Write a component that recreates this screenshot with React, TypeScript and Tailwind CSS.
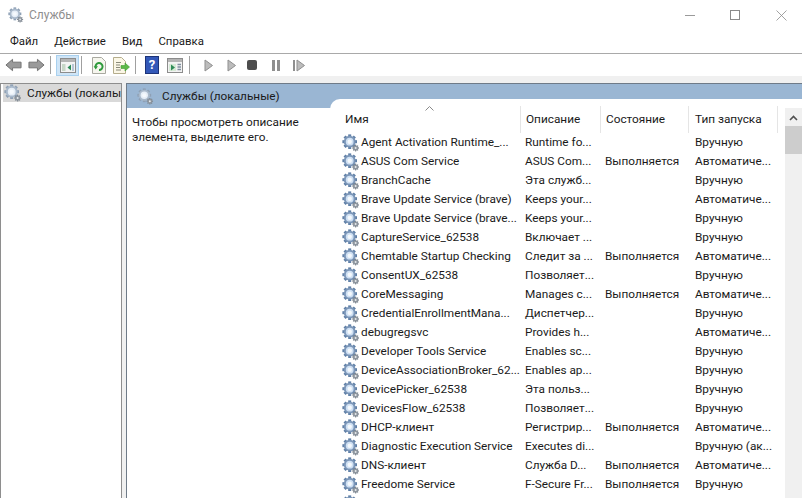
import React from 'react';

const rows = [
  ['Agent Activation Runtime_...', 'Runtime fo...', '', 'Вручную'],
  ['ASUS Com Service', 'ASUS Com...', 'Выполняется', 'Автоматиче...'],
  ['BranchCache', 'Эта служб...', '', 'Вручную'],
  ['Brave Update Service (brave)', 'Keeps your...', '', 'Автоматиче...'],
  ['Brave Update Service (brave...', 'Keeps your...', '', 'Вручную'],
  ['CaptureService_62538', 'Включает ...', '', 'Вручную'],
  ['Chemtable Startup Checking', 'Следит за ...', 'Выполняется', 'Автоматиче...'],
  ['ConsentUX_62538', 'Позволяет...', '', 'Вручную'],
  ['CoreMessaging', 'Manages c...', 'Выполняется', 'Автоматиче...'],
  ['CredentialEnrollmentMana...', 'Диспетчер...', '', 'Вручную'],
  ['debugregsvc', 'Provides h...', '', 'Автоматиче...'],
  ['Developer Tools Service', 'Enables sc...', '', 'Вручную'],
  ['DeviceAssociationBroker_62...', 'Enables ap...', '', 'Вручную'],
  ['DevicePicker_62538', 'Эта польз...', '', 'Вручную'],
  ['DevicesFlow_62538', 'Позволяет...', '', 'Вручную'],
  ['DHCP-клиент', 'Регистрир...', 'Выполняется', 'Автоматиче...'],
  ['Diagnostic Execution Service', 'Executes di...', '', 'Вручную (ак...'],
  ['DNS-клиент', 'Служба D...', 'Выполняется', 'Автоматиче...'],
  ['Freedome Service', 'F-Secure Fr...', 'Выполняется', 'Вручную'],
  ['', '', '', ''],
];

const teeth = [0, 45, 90, 135, 180, 225, 270, 315];

function Gear({ size = 18, pale = false }: { size?: number; pale?: boolean }) {
  const main = pale ? '#a9b9cb' : '#7b96b8';
  const dark = pale ? '#8ea0b5' : '#5f7fa6';
  const inner = pale ? '#e6eef7' : '#cfe0f3';
  return (
    <svg width={size} height={size} viewBox="0 0 18 18" className="shrink-0">
      {teeth.map((a) => (
        <rect key={a} x="6.2" y="0.4" width="3" height="3.2" fill={dark} transform={`rotate(${a} 7.7 7.7)`} />
      ))}
      <circle cx="7.7" cy="7.7" r="5.9" fill={main} />
      <circle cx="7.7" cy="7.7" r="3.9" fill={inner} />
      <circle cx="7.7" cy="7.7" r="2.2" fill="#f5f9fd" />
      {teeth.map((a) => (
        <rect key={a} x="13" y="10.6" width="1.2" height="1.6" fill="#77808a" transform={`rotate(${a} 13.6 14)`} />
      ))}
      <circle cx="13.6" cy="14" r="2.6" fill="#8d959e" />
      <circle cx="13.6" cy="14" r="1" fill="#e8ebee" />
    </svg>
  );
}

function Sep() {
  return <div className="w-px h-[18px] bg-[#a0a0a0] shrink-0" />;
}

function Arrow({ flip = false }: { flip?: boolean }) {
  return (
    <svg width="17" height="14" viewBox="0 0 18 14" className={flip ? 'rotate-180' : ''}>
      <path d="M1 7 L8 1 V4 H17 V10 H8 V13 Z" fill="#9a9a9a" stroke="#707070" strokeWidth="1" />
    </svg>
  );
}

function Window({ variant }: { variant: 'tree' | 'play' }) {
  return (
    <svg width="16" height="15" viewBox="0 0 16 15">
      <rect x="0.5" y="0.5" width="15" height="14" fill="#f3f3f3" stroke="#8c8c8c" />
      <rect x="1" y="1" width="14" height="3" fill="#b4b4b4" />
      {variant === 'tree' ? (
        <>
          <rect x="2" y="6" width="3.5" height="7" fill="#c7d6c7" />
          <path d="M11 6.5 V12.5 L7.5 9.5 Z" fill="#2e8b57" />
          <rect x="12" y="6" width="2" height="7" fill="#b7c6d6" />
        </>
      ) : (
        <>
          <rect x="2" y="6" width="7" height="7" fill="#d6ead6" />
          <path d="M4 6.5 V12.5 L8 9.5 Z" fill="#2e8b57" />
          <path d="M10.5 6.5 H14 M10.5 9 H14 M10.5 11.5 H14" stroke="#7f8f9f" strokeWidth="1.4" />
        </>
      )}
    </svg>
  );
}

function Refresh() {
  return (
    <svg width="14" height="17" viewBox="0 0 14 17">
      <path d="M0.5 0.5 H9.5 L13.5 4.5 V16.5 H0.5 Z" fill="#f6f6ee" stroke="#a9a9a0" />
      <path d="M3.6 10 A3.5 3.5 0 1 1 7 13" fill="none" stroke="#2f9a3c" strokeWidth="2" />
      <path d="M1.6 9.2 H6 L3.7 12.4 Z" fill="#2f9a3c" />
    </svg>
  );
}

function ExportIcon() {
  return (
    <svg width="17" height="17" viewBox="0 0 17 17">
      <path d="M0.5 0.5 H8.5 L12.5 4.5 V16.5 H0.5 Z" fill="#fbf7e6" stroke="#b5ad8c" />
      <path d="M3 5.5 H8 M3 8 H7 M3 10.5 H7 M3 13 H8" stroke="#8a8a7a" strokeWidth="1" />
      <path d="M8 8.5 H12 V6 L16.5 10 L12 14 V11.5 H8 Z" fill="#5cb947" stroke="#3f9a32" strokeWidth="0.6" />
    </svg>
  );
}

function Play() {
  return (
    <svg width="10" height="13" viewBox="0 0 10 13">
      <path d="M1 1 L8.5 6.5 L1 12 Z" fill="#bcbcbc" stroke="#8f8f8f" />
    </svg>
  );
}

function Cell({ w, children }: { w: string; children?: React.ReactNode }) {
  return <div className={`${w} shrink-0 whitespace-nowrap overflow-hidden`}>{children}</div>;
}

export default function App() {
  return (
    <div className="w-[802px] h-[498px] overflow-hidden bg-white flex flex-col text-[11.8px] leading-[19px] text-[#1a1a1a] font-['Roboto','Noto_Sans',sans-serif]">
      {/* title bar */}
      <div className="h-[30px] shrink-0 flex items-center pl-[8px]">
        <Gear size={16} pale />
        <span className="ml-[5px] text-[12px] text-[#8f8f8f]">Службы</span>
        <div className="ml-auto flex items-center text-[#8a8a8a]">
          <div className="w-[40px] flex justify-center">
            <div className="w-[10px] h-px bg-[#9a9a9a]" />
          </div>
          <div className="w-[50px] flex justify-center">
            <div className="w-[10px] h-[10px] border border-[#8a8a8a]" />
          </div>
          <div className="w-[42px] flex justify-center">
            <svg width="11" height="11" viewBox="0 0 11 11">
              <path d="M0.5 0.5 L10.5 10.5 M10.5 0.5 L0.5 10.5" stroke="#8a8a8a" strokeWidth="0.8" />
            </svg>
          </div>
        </div>
      </div>

      {/* menu */}
      <div className="h-[22px] shrink-0 flex items-center pl-[10px] gap-[16px] text-[11.4px] border-b border-[#a9a9a9] box-content pb-px">
        <span>Файл</span>
        <span>Действие</span>
        <span>Вид</span>
        <span>Справка</span>
      </div>

      {/* toolbar */}
      <div className="h-[22px] shrink-0 flex items-center pl-[5px]">
        <Arrow />
        <div className="w-[6px]" />
        <Arrow flip />
        <div className="w-[5px]" />
        <Sep />
        <div className="w-[5px]" />
        <div className="w-[23px] h-[21px] bg-[#cfe5f7] border border-[#a9d0ee] flex items-center justify-center">
          <Window variant="tree" />
        </div>
        <div className="w-[2px]" />
        <Sep />
        <div className="w-[10px]" />
        <Refresh />
        <div className="w-[7px]" />
        <ExportIcon />
        <div className="w-[5px]" />
        <Sep />
        <div className="w-[9px]" />
        <div className="w-[14px] h-[18px] bg-[#3358b8] border border-[#1c3378] text-white text-[13px] leading-[16px] font-bold text-center">?</div>
        <div className="w-[8px]" />
        <Window variant="play" />
        <div className="w-[6px]" />
        <Sep />
        <div className="w-[14px]" />
        <Play />
        <div className="w-[13px]" />
        <Play />
        <div className="w-[10px]" />
        <div className="w-[10px] h-[10px] rounded-[2px] bg-[#4d4d4d]" />
        <div className="w-[15px]" />
        <div className="flex gap-[2px]">
          <div className="w-[3px] h-[11px] bg-[#8f8f8f]" />
          <div className="w-[3px] h-[11px] bg-[#8f8f8f]" />
        </div>
        <div className="w-[13px]" />
        <div className="w-[2px] h-[11px] bg-[#8f8f8f] mr-px" />
        <Play />
      </div>

      {/* strip between toolbar and panes */}
      <div className="h-[7px] shrink-0 bg-[#f0f0f0]" />

      {/* panes */}
      <div className="flex-1 min-h-0 flex bg-[#f0f0f0]">
        <div className="w-[122px] shrink-0 bg-white border border-[#8e8e8e] border-b-0 overflow-hidden">
          <div className="h-[18px] ml-[2px] bg-[#d9d9d9] flex items-center pl-[1px] whitespace-nowrap">
            <Gear size={18} pale />
            <span className="ml-[5px] pt-px">Службы (локалы</span>
          </div>
        </div>
        <div className="w-[4px] shrink-0" />
        <div className="flex-1 min-w-0 bg-white border-l border-t border-[#6f7b88] flex flex-col">
          <div className="h-[24px] shrink-0 bg-[#9ab6d3] flex items-center pl-[10px]">
            <Gear size={17} pale />
            <span className="ml-[8px] pt-px">Службы (локальные)</span>
          </div>
          <div className="flex-1 min-h-0 flex">
            <div className="w-[203px] shrink-0 pl-[5px] pt-[7px] leading-[15px]">
              Чтобы просмотреть описание<br />элемента, выделите его.
            </div>
            <div className="flex-1 min-w-0 -mt-[9px] bg-white rounded-tl-[10px] flex overflow-hidden relative">
              <div className="w-[455px] shrink-0 pt-[6px]">
                <div className="h-[28px] flex items-start pt-[1px]">
                  <div className="w-[190px] pl-[15px] h-[27px] flex items-center relative">
                    Имя
                    <svg width="9" height="5" viewBox="0 0 9 5" className="absolute left-[95px] top-0">
                      <path d="M0.5 4.5 L4.5 0.5 L8.5 4.5" fill="none" stroke="#8a8a8a" />
                    </svg>
                  </div>
                  <div className="w-[80px] pl-[5px] h-[27px] flex items-center border-l border-[#e5e5e5]">Описание</div>
                  <div className="w-[88px] pl-[5px] h-[27px] flex items-center border-l border-[#e5e5e5]">Состояние</div>
                  <div className="w-[90px] pl-[6px] h-[27px] flex items-center border-l border-[#e5e5e5] border-r">Тип запуска</div>
                </div>
                {rows.map((r, i) => (
                  <div key={i} className="h-[19px] flex items-center">
                    <div className="w-[190px] shrink-0 pl-[12px] flex items-center">
                      <Gear size={18} />
                      <span className="ml-[1px] whitespace-nowrap">{r[0]}</span>
                    </div>
                    <Cell w="w-[80px] pl-[5px]">{r[1]}</Cell>
                    <Cell w="w-[88px] pl-[5px]">{r[2]}</Cell>
                    <Cell w="w-[90px] pl-[7px]">{r[3]}</Cell>
                  </div>
                ))}
              </div>
              <div className="w-[17px] ml-auto shrink-0 bg-[#f0f0f0] flex flex-col mt-[9px]">
                <div className="h-[18px] flex items-center justify-center pt-[2px]">
                  <svg width="9" height="6" viewBox="0 0 9 6">
                    <path d="M1 5 L4.5 1.5 L8 5" fill="none" stroke="#505050" strokeWidth="1.6" />
                  </svg>
                </div>
                <div className="h-[28px] bg-[#cdcdcd]" />
              </div>
            </div>
          </div>
        </div>
      </div>
    </div>
  );
}
